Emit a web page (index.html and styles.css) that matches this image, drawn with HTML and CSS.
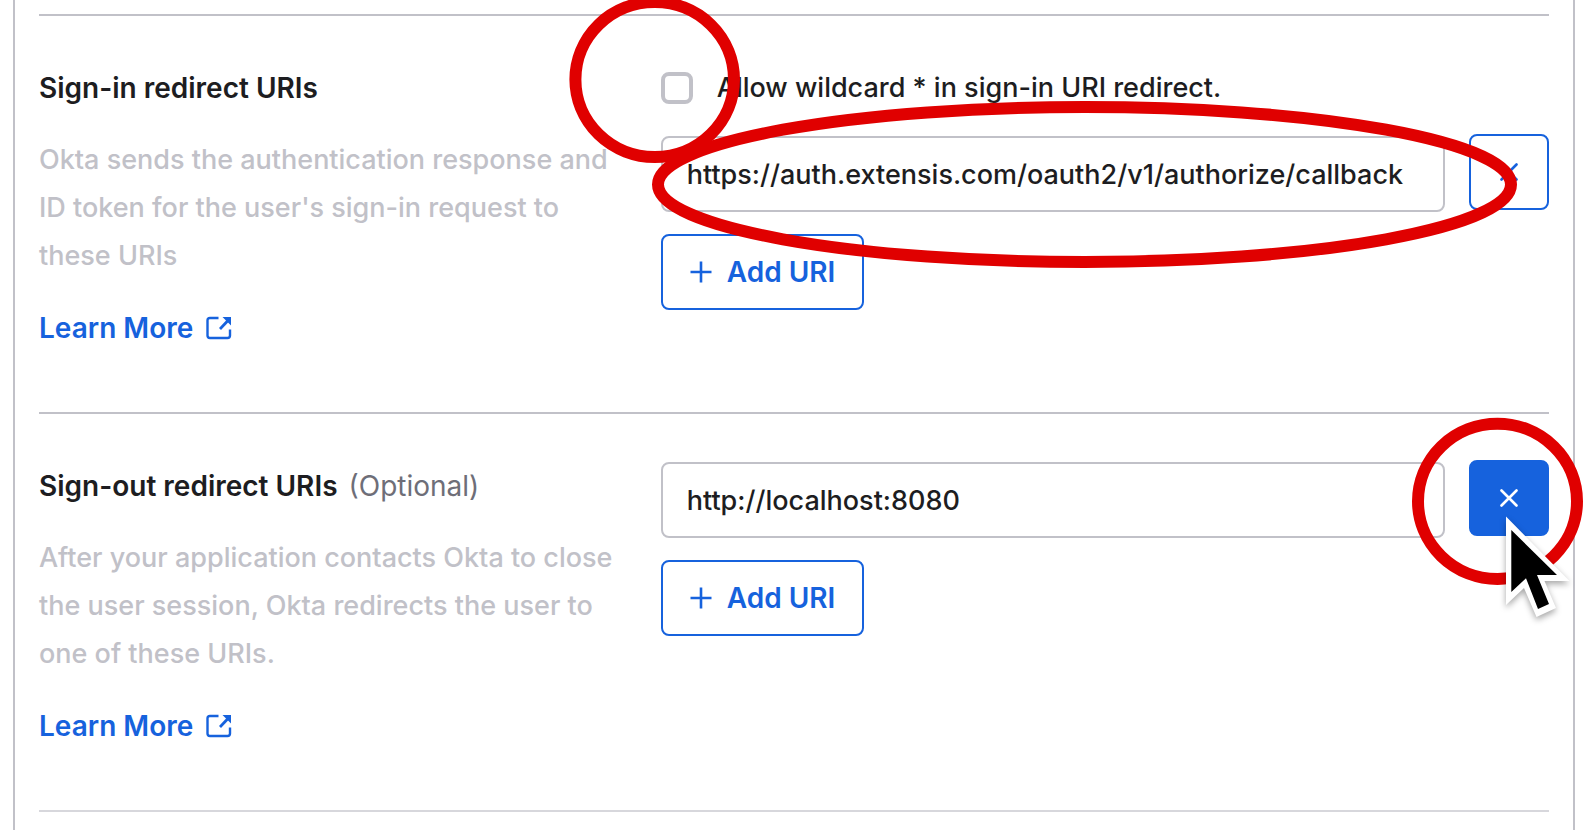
FILE: index.html
```html
<!DOCTYPE html>
<html lang="en">
<head>
<meta charset="utf-8">
<meta name="viewport" content="width=device-width, initial-scale=1">
<title>Redirect URIs</title>
<link rel="stylesheet" href="styles.css">
</head>
<body>
<svg class="sprite" aria-hidden="true">
  <symbol id="external" viewBox="0 0 26 24">
    <path d="M12.500 2H4Q1.500 2 1.500 4.500V19.500Q1.500 22 4 22H21.500Q24 22 24 19.500V13.500" fill="none" stroke="currentColor" stroke-width="2.400"/>
    <path d="M14 13L22 4.500" fill="none" stroke="currentColor" stroke-width="2.800"/>
    <path d="M16.500 1H25V9.500Z" fill="currentColor"/>
  </symbol>
  <symbol id="plus" viewBox="0 0 22 22">
    <path d="M11 0.500V21.500M0.500 11H21.500" fill="none" stroke="currentColor" stroke-width="2.600"/>
  </symbol>
  <symbol id="cross" viewBox="0 0 18 18">
    <path d="M1.500 1.500L16.500 16.500M16.500 1.500L1.500 16.500" fill="none" stroke="currentColor" stroke-width="2.600" stroke-linecap="round"/>
  </symbol>
</svg>
<main class="panel">
  <section class="setting">
    <div class="about">
      <h2 class="title">Sign-in redirect URIs</h2>
      <p class="description">Okta sends the authentication response and ID token for the user's sign-in request to these URIs</p>
      <a class="more" href="#sign-in">Learn More <svg class="external"><use href="#external"/></svg></a>
    </div>
    <div class="fields">
      <label class="wildcard"><input class="check" type="checkbox"> <span>Allow wildcard * in sign-in URI redirect.</span></label>
      <div class="uri">
        <input class="text" type="text" aria-label="Sign-in redirect URI" value="https://auth.extensis.com/oauth2/v1/authorize/callback">
        <button class="button remove" type="button" aria-label="Remove sign-in URI"><svg class="cross"><use href="#cross"/></svg></button>
      </div>
      <button class="button add" type="button"><svg class="plus"><use href="#plus"/></svg>Add URI</button>
    </div>
  </section>
  <section class="setting">
    <div class="about">
      <h2 class="title">Sign-out redirect URIs <span class="optional">(Optional)</span></h2>
      <p class="description">After your application contacts Okta to close the user session, Okta redirects the user to one of these URIs.</p>
      <a class="more" href="#sign-out">Learn More <svg class="external"><use href="#external"/></svg></a>
    </div>
    <div class="fields">
      <div class="uri">
        <input class="text" type="text" aria-label="Sign-out redirect URI" value="http://localhost:8080">
        <button class="button remove active" type="button" aria-label="Remove sign-out URI"><svg class="cross"><use href="#cross"/></svg></button>
      </div>
      <button class="button add" type="button"><svg class="plus"><use href="#plus"/></svg>Add URI</button>
    </div>
  </section>
  <hr class="end">
</main>
<svg class="annotations" width="1589" height="830" viewBox="0 0 1589 830" aria-hidden="true">
  <g fill="none" stroke="#e00000" stroke-width="12">
    <ellipse cx="654.700" cy="79.500" rx="79.300" ry="77.500"/>
    <ellipse cx="1084.500" cy="184.500" rx="426.500" ry="77.500"/>
    <ellipse cx="1497.500" cy="501.300" rx="79.500" ry="77.600"/>
  </g>
  <g class="pointer">
    <path d="M1506 516.500V605L1524 588L1536.500 617L1556 608L1544.500 581H1569.500Z" fill="#fff"/>
    <path d="M1511.300 530V592L1526 578.300L1538 609L1549 604L1537 575H1557Z" fill="#000"/>
  </g>
</svg>
</body>
</html>
```
FILE: styles.css
```css
* {
  box-sizing: border-box;
}

body {
  margin: 0;
  background: #fff;
  color: #1d1d21;
  font: 500 27px/48px Inter, "Liberation Sans", sans-serif;
}

.sprite {
  position: absolute;
  width: 0;
  height: 0;
}

.panel {
  min-height: 100vh;
  margin: 0 14px 0 13px;
  padding: 14px 24px 0;
  border: solid #c1c1c8;
  border-width: 0 2px;
}

.setting {
  display: grid;
  grid-template-columns: 7fr 10fr;
  border-top: 2px solid #c1c1c8;
}

.about {
  padding: 48px 24px 60px 0;
}

.title {
  margin: 0 0 24px;
  font-size: 28px;
  font-weight: 600;
}

.optional {
  margin-left: 4px;
  color: #6e6e78;
  font-weight: 400;
}

.description {
  margin: 0 0 24px;
  color: #c1c1c8;
}

.more {
  display: flex;
  align-items: center;
  gap: 13px;
  width: max-content;
  color: #1662dd;
  font-size: 28px;
  font-weight: 600;
  text-decoration: none;
}

.external {
  width: 26px;
  height: 24px;
}

.fields {
  padding-top: 46px;
}

.wildcard {
  display: flex;
  align-items: center;
  gap: 24px;
  height: 52px;
  margin-bottom: 20px;
}

.check {
  appearance: none;
  width: 32px;
  height: 32px;
  margin: 0;
  border: 4px solid #c1c1c8;
  border-radius: 8px;
  background: #fff;
}

.uri {
  display: flex;
  align-items: flex-start;
  gap: 24px;
  margin-bottom: 22px;
}

.text {
  flex: 1;
  min-width: 0;
  height: 76px;
  margin: 2px 0 0;
  padding: 0 24px;
  border: 2px solid #c1c1c8;
  border-radius: 8px;
  background: #fff;
  color: #1d1d21;
  font: inherit;
}

.button {
  display: flex;
  align-items: center;
  justify-content: center;
  height: 76px;
  border: 2px solid #1662dd;
  border-radius: 8px;
  background: #fff;
  color: #1662dd;
  font: inherit;
  font-size: 28px;
  font-weight: 600;
}

.remove {
  width: 80px;
  padding: 0;
}

.active {
  background: #1662dd;
  color: #fff;
}

.add {
  gap: 15px;
  padding: 0 27px;
}

.plus {
  width: 22px;
  height: 22px;
}

.cross {
  width: 18px;
  height: 18px;
}

.end {
  height: 2px;
  margin: 0;
  border: 0;
  background: #d7d7dc;
}

.annotations {
  position: absolute;
  top: 0;
  left: 0;
  pointer-events: none;
}

.pointer {
  filter: drop-shadow(0 3px 3px rgb(0 0 0 / 35%));
}
```
